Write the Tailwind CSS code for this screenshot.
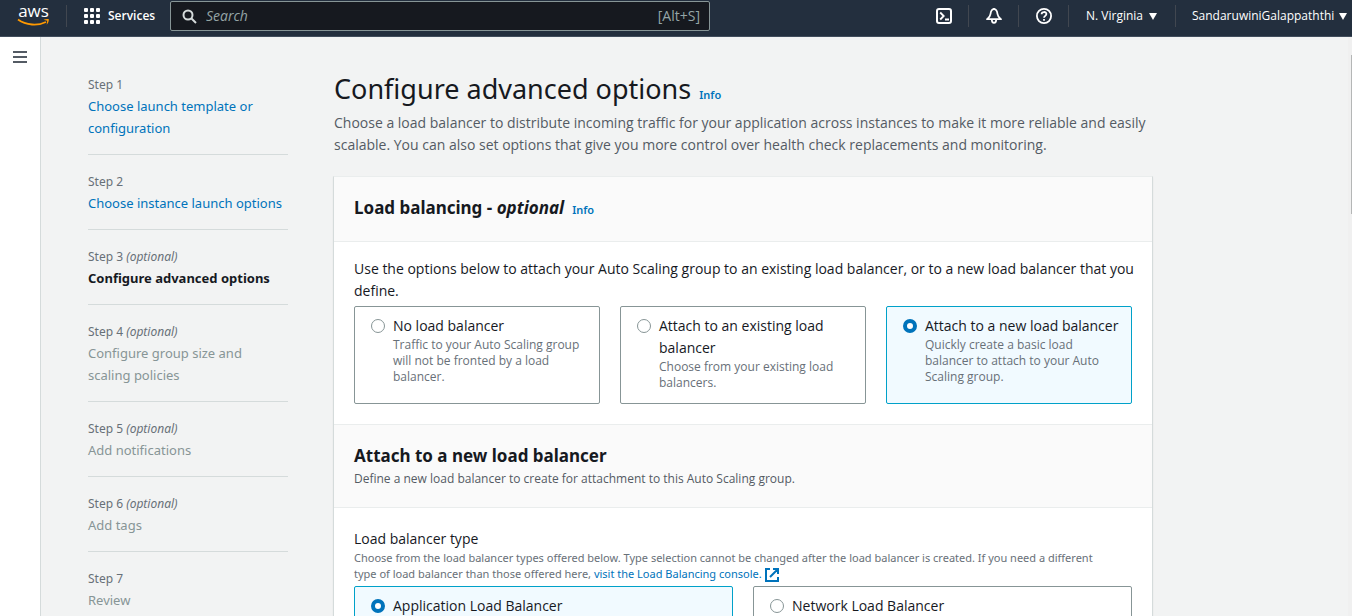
<!DOCTYPE html>
<html lang="en">
<head>
<meta charset="utf-8">
<title>Configure advanced options</title>
<script src="https://cdn.jsdelivr.net/npm/@tailwindcss/browser@4"></script>
</head>
<body class="flex h-screen flex-col overflow-hidden bg-[#f2f3f3] font-['Open_Sans','Noto_Sans',sans-serif] text-sm leading-[22px] text-[#16191f]">

<header class="flex h-[37px] shrink-0 items-start border-b border-[#414d5c] bg-[#232f3e] text-xs font-semibold text-white">
  <a href="#" aria-label="aws" class="ml-[17px] block">
    <svg width="33" height="28" viewBox="0 0 33 28" aria-hidden="true">
      <text x="16.500" y="17" text-anchor="middle" font-family="Open Sans, sans-serif" font-size="17" font-weight="500" fill="#fff">aws</text>
      <path d="M1 19.500C9 25.500 21 26 29 22" fill="none" stroke="#ff9900" stroke-width="1.800"/>
      <path d="M26.500 19.800C29 18.700 31 18.800 31.800 19.300C32 21.500 31 23.500 29.700 24.700L30.200 20.700Z" fill="#ff9900"/>
    </svg>
  </a>
  <span class="ml-4 mt-[5px] h-[22px] w-px bg-[#414750]"></span>
  <button type="button" class="ml-[17px] flex h-8 items-center gap-2">
    <svg width="16" height="16" viewBox="0 0 16 16" fill="#fff" aria-hidden="true">
      <rect width="4" height="4" rx="1"/><rect x="6" width="4" height="4" rx="1"/><rect x="12" width="4" height="4" rx="1"/>
      <rect y="6" width="4" height="4" rx="1"/><rect x="6" y="6" width="4" height="4" rx="1"/><rect x="12" y="6" width="4" height="4" rx="1"/>
      <rect y="12" width="4" height="4" rx="1"/><rect x="6" y="12" width="4" height="4" rx="1"/><rect x="12" y="12" width="4" height="4" rx="1"/>
    </svg>
    <span class="w-[54px] text-left">Services</span>
  </button>
  <label class="ml-2 mt-px flex h-[30px] w-[540px] items-center rounded-xs border border-[#879596] bg-[#16191f] pl-[11px] pr-[9px] font-normal text-[#95a5a6]">
    <svg width="15" height="15" viewBox="0 0 15 15" fill="none" stroke="#d5dbdb" stroke-width="2" aria-hidden="true"><circle cx="6" cy="6" r="4.500"/><path d="M9.500 9.500L14 14"/></svg>
    <input type="search" aria-label="Search" placeholder="Search" class="ml-[9px] min-w-0 flex-1 bg-transparent text-sm outline-none placeholder:italic placeholder:text-[#95a5a6]">
    <span class="text-sm">[Alt+S]</span>
  </label>
  <div class="ml-auto flex h-8 items-center">
    <button type="button" aria-label="CloudShell">
      <svg width="16" height="16" viewBox="0 0 16 16" fill="none" stroke="#fff" stroke-width="2" aria-hidden="true"><rect x="1" y="1" width="14" height="14" rx="2"/><path d="M4.200 4.500L7.700 8L4.200 11.500M9 11.500H13" stroke-width="1.800"/></svg>
    </button>
    <span class="ml-4 h-[22px] w-px bg-[#414750]"></span>
    <button type="button" aria-label="Notifications" class="ml-[17px]">
      <svg width="16" height="16" viewBox="0 0 16 16" fill="none" stroke="#fff" stroke-width="1.800" stroke-linejoin="round" aria-hidden="true"><path d="M8 1.200C5.300 1.200 4.800 3.500 4.500 6C4.200 8.500 3 9.300 1 11.200H15C13 9.300 11.800 8.500 11.500 6C11.200 3.500 10.700 1.200 8 1.200ZM5.800 11.500C5.800 16 10.200 16 10.200 11.500M8 0V2"/></svg>
    </button>
    <span class="ml-4 h-[22px] w-px bg-[#414750]"></span>
    <button type="button" aria-label="Help" class="ml-[17px]">
      <svg width="16" height="16" viewBox="0 0 16 16" fill="none" stroke="#fff" stroke-width="1.800" aria-hidden="true"><circle cx="8" cy="8" r="7.100"/><path d="M5.600 6.300C5.600 3.300 10.400 3.300 10.400 6.100C10.400 7.800 8 7.900 8 9.800M8 11V12.800"/></svg>
    </button>
    <span class="ml-4 h-[22px] w-px bg-[#414750]"></span>
    <button type="button" class="ml-[17px] flex w-[71px] items-center justify-between whitespace-nowrap"><span class="font-medium">N. Virginia</span><svg class="shrink-0" width="8" height="7" viewBox="0 0 8 7" fill="#fff" aria-hidden="true"><path d="M0 0H8L4 7Z"/></svg></button>
    <span class="ml-[18px] h-[22px] w-px bg-[#414750]"></span>
    <button type="button" class="ml-4 mr-[5px] flex w-[155px] items-center justify-between whitespace-nowrap"><span class="font-medium">SandaruwiniGalappaththi</span><svg class="shrink-0" width="8" height="7" viewBox="0 0 8 7" fill="#fff" aria-hidden="true"><path d="M0 0H8L4 7Z"/></svg></button>
  </div>
</header>

<div class="flex min-h-0 flex-1">
  <aside class="w-[41px] shrink-0 border-r border-[#d5dbdb] bg-white pl-[13px] pt-[14px]">
    <button type="button" aria-label="Open navigation" class="block"><svg width="14" height="12" viewBox="0 0 14 12" fill="#545b64" aria-hidden="true"><path d="M0 0H14V2H0ZM0 5H14V7H0ZM0 10H14V12H0Z"/></svg></button>
  </aside>

  <nav aria-label="Steps" class="ml-[47px] w-[200px] shrink-0 pt-10 font-['Noto_Sans',sans-serif] text-[13px] text-[#879596]">
    <ol>
      <li class="border-b border-[#d5dbdb] pb-[15px]"><div class="mb-[2px] text-xs leading-4 text-[#687078]">Step 1</div><a href="#" class="text-[#0073bb]">Choose launch template or configuration</a></li>
      <li class="border-b border-[#d5dbdb] pb-[15px] pt-[19px]"><div class="mb-[2px] text-xs leading-4 text-[#687078]">Step 2</div><a href="#" class="text-[#0073bb]">Choose instance launch options</a></li>
      <li class="border-b border-[#d5dbdb] pb-[15px] pt-[19px]"><div class="mb-[2px] text-xs leading-4 text-[#687078]">Step 3 <i>(optional)</i></div><div class="font-bold text-[#16191f]">Configure advanced options</div></li>
      <li class="border-b border-[#d5dbdb] pb-[15px] pt-[19px]"><div class="mb-[2px] text-xs leading-4 text-[#687078]">Step 4 <i>(optional)</i></div><div>Configure group size and<br>scaling policies</div></li>
      <li class="border-b border-[#d5dbdb] pb-[15px] pt-[19px]"><div class="mb-[2px] text-xs leading-4 text-[#687078]">Step 5 <i>(optional)</i></div><div>Add notifications</div></li>
      <li class="border-b border-[#d5dbdb] pb-[15px] pt-[19px]"><div class="mb-[2px] text-xs leading-4 text-[#687078]">Step 6 <i>(optional)</i></div><div>Add tags</div></li>
      <li class="pt-[19px]"><div class="mb-[2px] text-xs leading-4 text-[#687078]">Step 7</div><div>Review</div></li>
    </ol>
  </nav>

  <main class="ml-[45px] min-w-0 max-w-[820px] flex-1 pt-[34px]">
    <div class="flex items-baseline gap-2 pl-px font-['Noto_Sans',sans-serif]"><h1 class="text-[27px] leading-9">Configure advanced options</h1><a href="#" class="text-[11px] font-semibold text-[#0073bb]">Info</a></div>
    <p class="mt-[5px] pl-px text-[#545b64]">Choose a load balancer to distribute incoming traffic for your application across instances to make it more reliable and easily<br>scalable. You can also set options that give you more control over health check replacements and monitoring.</p>

    <section class="mt-5 border border-[#d5dbdb] border-t-[#eaeded] bg-white shadow-xs">
      <div class="flex h-[65px] items-center gap-2 border-b border-[#eaeded] bg-[#fafafa] px-5 pb-[2px] font-['Noto_Sans',sans-serif]">
        <h2 class="text-[17px] font-bold">Load balancing - <i>optional</i></h2><a href="#" class="pt-1 text-[11px] font-semibold text-[#0073bb]">Info</a>
      </div>
      <div class="px-5 pb-5 pt-4">
        <p class="whitespace-nowrap">Use the options below to attach your Auto Scaling group to an existing load balancer, or to a new load balancer that you<br>define.</p>
        <div class="mt-1 grid grid-cols-3 gap-5">
          <label class="flex min-h-[98px] items-start gap-2 rounded-xs border border-[#879596] px-4 pt-2">
            <input type="radio" name="attach" class="mt-1 size-[14px] shrink-0 appearance-none rounded-full border border-[#879596] bg-white checked:border-4 checked:border-[#0073bb]">
            <span><span class="block">No load balancer</span><span class="block text-xs leading-4 text-[#687078]">Traffic to your Auto Scaling group will not be fronted by a load balancer.</span></span>
          </label>
          <label class="flex min-h-[98px] items-start gap-2 rounded-xs border border-[#879596] px-4 pt-2">
            <input type="radio" name="attach" class="mt-1 size-[14px] shrink-0 appearance-none rounded-full border border-[#879596] bg-white checked:border-4 checked:border-[#0073bb]">
            <span><span class="block">Attach to an existing load balancer</span><span class="block text-xs leading-4 text-[#687078]">Choose from your existing load balancers.</span></span>
          </label>
          <label class="flex min-h-[98px] items-start gap-2 rounded-xs border border-[#00a1c9] bg-[#f1faff] px-4 pt-2">
            <input type="radio" name="attach" checked class="mt-1 size-[14px] shrink-0 appearance-none rounded-full border border-[#879596] bg-white checked:border-4 checked:border-[#0073bb]">
            <span><span class="block whitespace-nowrap">Attach to a new load balancer</span><span class="block text-xs leading-4 text-[#687078]">Quickly create a basic load<br>balancer to attach to your Auto<br>Scaling group.</span></span>
          </label>
        </div>
      </div>
      <div class="border-y border-[#eaeded] bg-[#fafafa] px-5 pb-5 pt-[18px]">
        <h2 class="font-['Noto_Sans',sans-serif] text-[17px] font-bold leading-[26px]">Attach to a new load balancer</h2>
        <p class="pt-[2px] text-xs leading-4 text-[#545b64]">Define a new load balancer to create for attachment to this Auto Scaling group.</p>
      </div>
      <div class="px-5 pt-5">
        <h3>Load balancer type</h3>
        <p class="font-['Noto_Sans',sans-serif] text-[11px] leading-4 text-[#687078]">Choose from the load balancer types offered below. Type selection cannot be changed after the load balancer is created. If you need a different<br>type of load balancer than those offered here, <a href="#" class="text-[#0073bb]">visit the Load Balancing console.
          <svg class="-my-1 inline-block align-middle" width="14" height="14" viewBox="0 0 14 14" fill="none" stroke="#0073bb" stroke-width="2" aria-hidden="true"><path d="M5 1H1V13H13V9M8 1H13V6M13 1L5 9"/></svg></a></p>
        <div class="mt-1 grid grid-cols-2 gap-5">
          <label class="flex min-h-[98px] items-start gap-2 rounded-xs border border-[#00a1c9] bg-[#f1faff] px-4 pt-2">
            <input type="radio" name="type" checked class="mt-1 size-[14px] shrink-0 appearance-none rounded-full border border-[#879596] bg-white checked:border-4 checked:border-[#0073bb]">
            <span>Application Load Balancer</span>
          </label>
          <label class="flex min-h-[98px] items-start gap-2 rounded-xs border border-[#879596] px-4 pt-2">
            <input type="radio" name="type" class="mt-1 size-[14px] shrink-0 appearance-none rounded-full border border-[#879596] bg-white checked:border-4 checked:border-[#0073bb]">
            <span>Network Load Balancer</span>
          </label>
        </div>
      </div>
    </section>
  </main>
  <div class="ml-auto w-1 shrink-0 bg-[#f0f0f0] pt-[18px]"><div class="ml-auto h-[159px] w-px bg-[#b4b6b6]"></div></div>
</div>
</body>
</html>
